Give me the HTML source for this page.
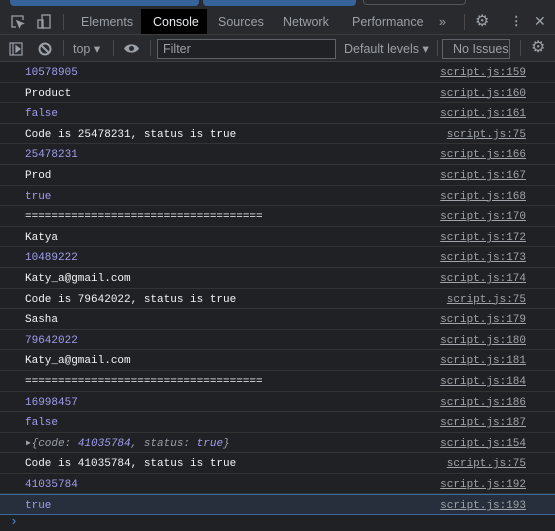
<!DOCTYPE html>
<html><head><style>
*{margin:0;padding:0;box-sizing:border-box}
body{width:555px;height:531px;background:#202124;overflow:hidden;position:relative;font-family:"Liberation Sans",sans-serif;color:#bdc1c6}
.top{position:absolute;left:0;top:0;width:555px;height:9px;background:#292a2d}
.pill{position:absolute;top:0;height:6px;background:#35639a;border-radius:0 0 4px 4px}
.tabs{position:absolute;top:9px;left:0;width:555px;height:26px;background:#292a2d;border-bottom:1px solid #3c3c3c;font-size:12.5px}
.tabs span{position:absolute;top:6px;color:#9aa0a6}
.tool{position:absolute;top:35px;left:0;width:555px;height:27px;background:#292a2d;border-bottom:1px solid #3c3c3c;font-size:12.5px;color:#9aa0a6}
.sep{position:absolute;width:1px;background:#4a4a4a}
.rows{position:absolute;top:62px;left:0;width:555px;font-family:"Liberation Mono",monospace;font-size:11px}
.r{height:20.6px;border-bottom:1px solid #333;position:relative;line-height:22px;color:#f1f3f4;padding-left:25px}
.r.n{color:#a09cf0}
.r a{position:absolute;right:29px;top:0;color:#a0a4a8;text-decoration:underline}
.r.hl{background:#262f3b;border-top:1px solid #3c6a9a;border-bottom:1px solid #3c6a9a}
</style></head><body>
<div class="top"><div class="pill" style="left:10px;width:189px"></div><div class="pill" style="left:203px;width:153px"></div><div style="position:absolute;left:363px;top:0;width:103px;height:5px;border:1px solid #555;border-top:none;border-radius:0 0 4px 4px"></div></div>
<div class="tabs">
<svg style="position:absolute;left:11px;top:6px" width="14" height="14" viewBox="0 0 14 14" fill="none" stroke="#9aa0a6" stroke-width="1.3"><path d="M5 12H1V1h11v4"/><path d="M6 6l6 2.5-2.5 1L8.5 12z" fill="#9aa0a6"/></svg>
<svg style="position:absolute;left:37px;top:5px" width="14" height="16" viewBox="0 0 14 16" fill="none" stroke="#9aa0a6" stroke-width="1.3"><rect x="5" y="1" width="8" height="13"/><rect x="1" y="6" width="5" height="8"/></svg>
<div class="sep" style="left:63px;top:5px;height:16px"></div>
<span style="left:81px">Elements</span>
<div style="position:absolute;left:141px;top:0;width:66px;height:25px;background:#000"></div>
<span style="left:153px;color:#e8eaed">Console</span>
<span style="left:218px">Sources</span>
<span style="left:283px">Network</span>
<span style="left:352px">Performance</span>
<span style="left:439px">»</span>
<div class="sep" style="left:464px;top:5px;height:16px"></div>
<span style="left:475px;font-size:16px;top:2px">⚙</span>
<span style="left:510px;font-weight:bold;top:4px">⋮</span>
<span style="left:534px;font-size:14px;top:4px">✕</span>
</div>
<div class="tool">
<svg style="position:absolute;left:9px;top:7px" width="14" height="14" viewBox="0 0 14 14" fill="none" stroke="#9aa0a6" stroke-width="1.2"><rect x="1" y="1" width="12" height="12"/><path d="M4 1v12"/><path d="M7 4l4 3-4 3z" fill="#9aa0a6"/></svg>
<svg style="position:absolute;left:38px;top:7px" width="14" height="14" viewBox="0 0 14 14" fill="none" stroke="#9aa0a6" stroke-width="2"><circle cx="7" cy="7" r="5.5"/><path d="M3 3l8 8"/></svg>
<div class="sep" style="left:63px;top:5px;height:16px"></div>
<span style="position:absolute;left:73px;top:6px">top ▾</span>
<div class="sep" style="left:113px;top:5px;height:16px"></div>
<svg style="position:absolute;left:123px;top:8px" width="17" height="11" viewBox="0 0 17 11"><path d="M1 5.5C4 0 13 0 16 5.5 13 11 4 11 1 5.5z" fill="#9aa0a6"/><circle cx="8.5" cy="5.5" r="2.5" fill="#292a2d"/></svg>
<div class="sep" style="left:150px;top:5px;height:16px"></div>
<div style="position:absolute;left:157px;top:4px;width:179px;height:20px;border:1px solid #5f6368;background:#202124"></div>
<span style="position:absolute;left:163px;top:7px">Filter</span>
<span style="position:absolute;left:344px;top:6px">Default levels ▾</span>
<div class="sep" style="left:437px;top:5px;height:16px"></div>
<div style="position:absolute;left:442px;top:4px;width:68px;height:20px;border:1px solid #5f6368"></div>
<span style="position:absolute;left:453px;top:7px">No Issues</span>
<div class="sep" style="left:520px;top:5px;height:16px"></div>
<span style="position:absolute;left:531px;top:2px;font-size:16px">⚙</span>
</div>
<div class="rows">
<div class="r n">10578905<a>script.js:159</a></div>
<div class="r">Product<a>script.js:160</a></div>
<div class="r n">false<a>script.js:161</a></div>
<div class="r">Code is 25478231, status is true<a>script.js:75</a></div>
<div class="r n">25478231<a>script.js:166</a></div>
<div class="r">Prod<a>script.js:167</a></div>
<div class="r n">true<a>script.js:168</a></div>
<div class="r">====================================<a>script.js:170</a></div>
<div class="r">Katya<a>script.js:172</a></div>
<div class="r n">10489222<a>script.js:173</a></div>
<div class="r">Katy_a@gmail.com<a>script.js:174</a></div>
<div class="r">Code is 79642022, status is true<a>script.js:75</a></div>
<div class="r">Sasha<a>script.js:179</a></div>
<div class="r n">79642022<a>script.js:180</a></div>
<div class="r">Katy_a@gmail.com<a>script.js:181</a></div>
<div class="r">====================================<a>script.js:184</a></div>
<div class="r n">16998457<a>script.js:186</a></div>
<div class="r n">false<a>script.js:187</a></div>
<div class="r" style="font-style:italic;color:#9aa0a6"><span style="font-style:normal;font-size:8px;position:absolute;left:26px">▶</span>&nbsp;{code: <span style="color:#a09cf0">41035784</span>, status: <span style="color:#a09cf0">true</span>}<a style="font-style:normal">script.js:154</a></div>
<div class="r">Code is 41035784, status is true<a>script.js:75</a></div>
<div class="r n">41035784<a>script.js:192</a></div>
<div class="r n hl">true<a>script.js:193</a></div>
</div>
<div style="position:absolute;left:10px;top:514px;color:#4c8ed9;font-size:13px;font-family:'Liberation Mono',monospace">›</div>
</body></html>
